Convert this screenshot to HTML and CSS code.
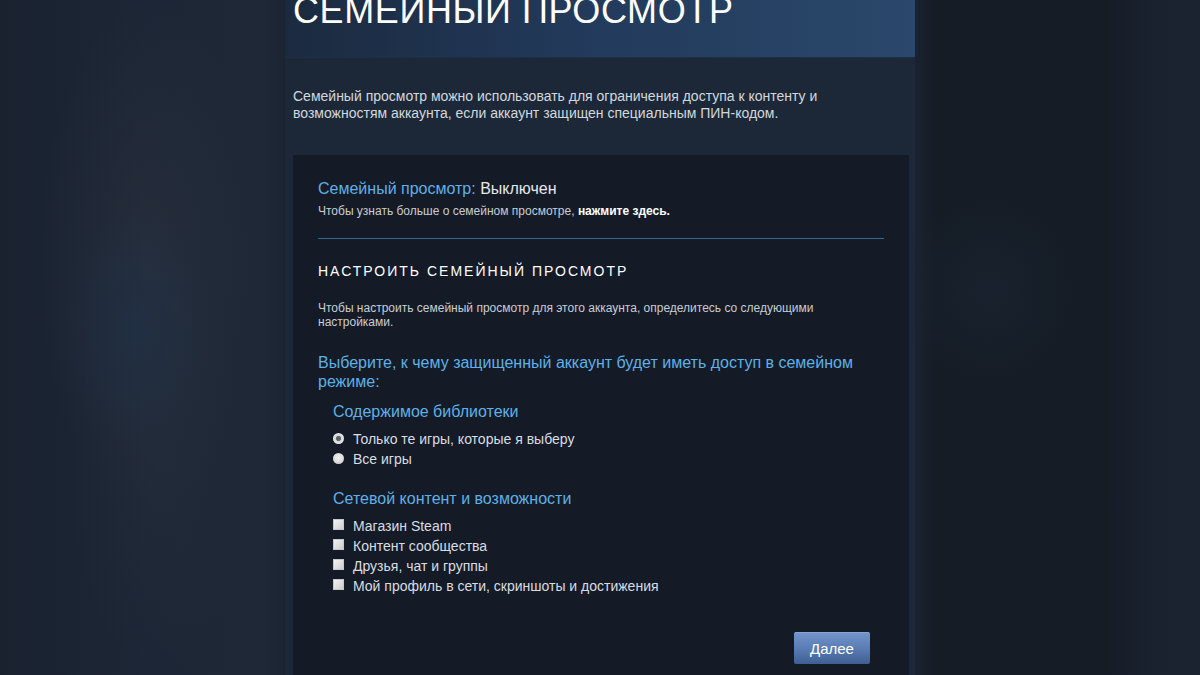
FILE: index.html
```html
<!DOCTYPE html>
<html lang="ru">
<head>
<meta charset="utf-8">
<title>Семейный просмотр</title>
<link rel="stylesheet" href="styles.css">
</head>
<body>
<div class="page">
  <div class="column">
    <div class="header">
      <h1 class="title">СЕМЕЙНЫЙ ПРОСМОТР</h1>
    </div>
    <p class="intro">Семейный просмотр можно использовать для ограничения доступа к контенту и возможностям аккаунта, если аккаунт защищен специальным ПИН-кодом.</p>
    <div class="panel">
      <div class="status"><span class="status-label">Семейный просмотр:</span> Выключен</div>
      <div class="learn">Чтобы узнать больше о семейном просмотре, <b class="learn-link">нажмите здесь.</b></div>
      <div class="divider"></div>
      <h2 class="section-title">Настроить семейный просмотр</h2>
      <p class="note">Чтобы настроить семейный просмотр для этого аккаунта, определитесь со следующими настройками.</p>
      <h3 class="question">Выберите, к чему защищенный аккаунт будет иметь доступ в семейном режиме:</h3>
      <div class="group">
        <h4 class="group-title">Содержимое библиотеки</h4>
        <ul class="options">
          <li class="option"><span class="radio checked"></span>Только те игры, которые я выберу</li>
          <li class="option"><span class="radio"></span>Все игры</li>
        </ul>
        <h4 class="group-title second">Сетевой контент и возможности</h4>
        <ul class="options">
          <li class="option"><span class="check"></span>Магазин Steam</li>
          <li class="option"><span class="check"></span>Контент сообщества</li>
          <li class="option"><span class="check"></span>Друзья, чат и группы</li>
          <li class="option"><span class="check"></span>Мой профиль в сети, скриншоты и достижения</li>
        </ul>
      </div>
      <div class="actions"><button class="btn">Далее</button></div>
    </div>
  </div>
</div>
</body>
</html>
```

FILE: styles.css
```css
html, body {
  margin: 0;
  padding: 0;
  height: 675px;
  overflow: hidden;
}
body {
  font-family: "Liberation Sans", Arial, sans-serif;
  background-color: #19212e;
}
.page {
  height: 675px;
  background:
    radial-gradient(ellipse 80px 120px at 135px 330px, rgba(30, 52, 78, 0.45), rgba(30, 52, 78, 0) 100%),
    radial-gradient(ellipse 110px 260px at 150px 260px, rgba(46, 52, 64, 0.5), rgba(46, 52, 64, 0) 100%),
    radial-gradient(ellipse 90px 200px at 160px 470px, rgba(38, 46, 60, 0.45), rgba(38, 46, 60, 0) 100%),
    radial-gradient(ellipse 90px 100px at 990px 290px, rgba(30, 44, 58, 0.35), rgba(30, 44, 58, 0) 100%),
    linear-gradient(to right, #1a2230 0%, #1d2636 12%, #1e2837 22%, #1b2331 24%, #1b2331 76%, #151c26 78%, #151c26 92%, #1a2230 96%, #1b2331 100%);
  display: flex;
  justify-content: center;
}
.column {
  width: 630px;
  background: #1c2838;
  padding: 0 6px 0 8px;
  box-sizing: border-box;
  display: flex;
  flex-direction: column;
}
.header {
  height: 58px;
  margin: 0 -6px 0 -8px;
  padding: 0 6px 0 8px;
  overflow: hidden;
  background: linear-gradient(to right, #1b2a3f 0%, #22395a 45%, #2a486b 100%);
  border-bottom: 1px solid #1e2e44;
  box-sizing: border-box;
}
.title {
  margin: -7px 0 0 0;
  font-size: 36px;
  line-height: 36px;
  font-weight: normal;
  letter-spacing: 0.6px;
  color: #ffffff;
}
.intro {
  margin: 30px 0 0 0;
  font-size: 14px;
  line-height: 17px;
  color: #d3d8de;
  width: 560px;
}
.panel {
  margin-top: 33px;
  width: 616px;
  flex: 1;
  background: #141b27;
  padding: 24px 25px 0 25px;
  box-sizing: border-box;
}
.status {
  font-size: 16px;
  line-height: 20px;
  color: #e6e8ea;
}
.status-label {
  color: #5fb0e6;
}
.learn {
  margin-top: 4px;
  font-size: 12px;
  line-height: 16px;
  color: #c8cdd3;
}
.learn-link {
  color: #ffffff;
}
.divider {
  margin-top: 19px;
  height: 1px;
  background: #39678a;
}
.section-title {
  margin: 23px 0 0 0;
  font-size: 14px;
  line-height: 18px;
  font-weight: normal;
  text-transform: uppercase;
  letter-spacing: 2px;
  color: #ffffff;
}
.note {
  margin: 21px 0 0 0;
  font-size: 12px;
  line-height: 14px;
  color: #c8cdd3;
  width: 500px;
}
.question {
  margin: 24px 0 0 0;
  font-size: 16px;
  line-height: 19px;
  font-weight: normal;
  color: #5fb0e6;
}
.group {
  padding-left: 15px;
}
.group-title {
  margin: 11px 0 0 0;
  font-size: 16px;
  line-height: 20px;
  font-weight: normal;
  color: #5fb0e6;
}
.group-title.second {
  margin-top: 20px;
}
.options {
  list-style: none;
  margin: 7px 0 0 0;
  padding: 0;
}
.option {
  display: flex;
  align-items: center;
  font-size: 14px;
  line-height: 20px;
  height: 20px;
  color: #d9dde2;
}
.radio {
  width: 11px;
  height: 11px;
  border-radius: 50%;
  margin-right: 9px;
  margin-top: -1px;
  background: radial-gradient(circle at 50% 40%, #f2f2f2 0%, #d6d6d6 70%, #bcbcbc 100%);
  box-sizing: border-box;
  flex: none;
}
.radio.checked {
  background: radial-gradient(circle, #55585d 0%, #676a6f 28%, #d6d6d6 38%, #e8e8e8 70%, #c4c4c4 100%);
}
.check {
  width: 11px;
  height: 11px;
  margin-right: 9px;
  margin-top: -4px;
  background: linear-gradient(135deg, #f2f2f2 0%, #dcdcdc 60%, #cccccc 100%);
  border: 1px solid #c4c8cc;
  box-sizing: border-box;
  flex: none;
}
.actions {
  display: flex;
  justify-content: flex-end;
  margin-top: 36px;
  padding-right: 14px;
}
.btn {
  width: 76px;
  height: 32px;
  border: none;
  border-radius: 2px;
  padding: 0;
  font-family: "Liberation Sans", Arial, sans-serif;
  font-size: 15px;
  color: #ffffff;
  background: linear-gradient(to bottom, #7395cc 0%, #5a7db5 50%, #3f5f94 100%);
  box-shadow: inset 0 1px 0 rgba(255, 255, 255, 0.15);
}
```
